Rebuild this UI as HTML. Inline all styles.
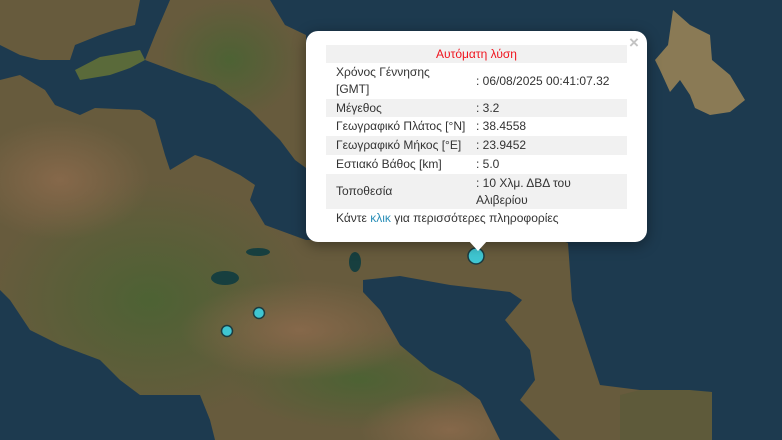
<!DOCTYPE html>
<html><head><meta charset="utf-8"><style>
html,body{margin:0;padding:0;width:782px;height:440px;overflow:hidden;font-family:"Liberation Sans",sans-serif;position:relative}
#map{position:absolute;left:0;top:0;display:block}
.pop{position:absolute;left:306px;top:31px;width:341px;height:211px;background:#fff;border-radius:12px;box-shadow:0 3px 14px rgba(0,0,0,.4)}
.tip{position:absolute;left:468px;top:240px;width:0;height:0;border-left:10px solid transparent;border-right:10px solid transparent;border-top:11px solid #fff}
.x{position:absolute;left:629px;top:33px;color:#c3c3c3;font:bold 17px "Liberation Sans",sans-serif;line-height:20px}
table{position:absolute;left:326px;top:45px;width:301px;border-collapse:collapse;font-size:12px;color:#333}
td{padding:0 0 0 10px;line-height:17px;vertical-align:middle}
td.v{padding-left:0}
tr.g{background:#f1f1f1}
.more{position:absolute;left:336px;top:211px;font-size:12px;color:#333;line-height:14px}
.more span{color:#2a8fb8}
</style></head><body>
<svg id="map" width="782" height="440" viewBox="0 0 782 440">
<defs>
<radialGradient id="r1" cx="0.5" cy="0.5" r="0.5"><stop offset="0" stop-color="#4d6234"/><stop offset="1" stop-color="#4d6234" stop-opacity="0"/></radialGradient>
<radialGradient id="r2" cx="0.5" cy="0.5" r="0.5"><stop offset="0" stop-color="#86684a"/><stop offset="1" stop-color="#86684a" stop-opacity="0"/></radialGradient>
</defs>
<rect width="782" height="440" fill="#675b3d"/>
<ellipse cx="150" cy="300" rx="160" ry="120" fill="url(#r1)"/>
<ellipse cx="360" cy="380" rx="130" ry="50" fill="url(#r1)"/>
<ellipse cx="300" cy="330" rx="120" ry="50" fill="url(#r2)"/>
<ellipse cx="60" cy="180" rx="90" ry="60" fill="url(#r2)"/>
<ellipse cx="450" cy="430" rx="90" ry="40" fill="url(#r2)"/>
<ellipse cx="230" cy="60" rx="70" ry="60" fill="url(#r1)"/>
<g fill="#1d3a4f">
<polygon points="140,0 170,0 155,35 145,60 185,75 215,85 250,110 280,140 295,160 306,168 306,240 265,225 250,200 255,185 240,175 210,160 195,155 170,170 165,155 155,120 140,110 95,108 80,115 55,105 45,90 20,75 0,80 0,45 20,55 40,60 70,60 75,45 100,35 115,30 135,25"/>
<polygon points="270,0 782,0 782,440 712,440 712,392 640,390 600,385 585,340 572,300 568,243 560,240 306,240 306,35 285,25"/>
<polygon points="363,280 400,276 450,285 510,292 522,300 505,320 530,350 535,380 520,400 540,420 560,440 500,440 480,400 460,385 430,370 400,345 380,310 363,292"/>
<polygon points="0,290 10,300 30,330 60,345 100,360 120,380 140,395 200,395 210,420 215,440 0,440"/>
</g>
<polygon points="75,70 100,57 140,50 145,60 130,68 110,75 80,80" fill="#5a6a3a"/>
<polygon points="673,10 690,25 710,35 712,60 730,75 745,100 730,112 710,115 695,108 690,95 680,80 670,92 660,70 655,60 668,45" fill="#8a7a55"/>
<polygon points="620,395 640,390 690,390 712,392 712,440 620,440" fill="#5e5a3a"/>
<g fill="#173f3f"><ellipse cx="225" cy="278" rx="14" ry="7"/><ellipse cx="258" cy="252" rx="12" ry="4"/><ellipse cx="355" cy="262" rx="6" ry="10"/></g>
<g stroke="#1b3b40" stroke-width="1.5" fill="#3fc6d2">
<circle cx="476" cy="256" r="8"/><circle cx="259" cy="313" r="5.5"/><circle cx="227" cy="331" r="5.5"/>
</g>
</svg>
<div class="pop"></div><div class="tip"></div>
<div class="x">×</div>
<table>
<tr class="g"><td colspan="2" style="text-align:center;color:#f0141e;padding:0;height:18px">Αυτόματη λύση</td></tr>
<tr style="height:36px"><td>Χρόνος Γέννησης<br>[GMT]</td><td class="v">: 06/08/2025 00:41:07.32</td></tr>
<tr class="g" style="height:18px"><td>Μέγεθος</td><td class="v">: 3.2</td></tr>
<tr style="height:19px"><td>Γεωγραφικό Πλάτος [°N]</td><td class="v">: 38.4558</td></tr>
<tr class="g" style="height:19px"><td>Γεωγραφικό Μήκος [°E]</td><td class="v">: 23.9452</td></tr>
<tr style="height:19px"><td>Εστιακό Βάθος [km]</td><td class="v">: 5.0</td></tr>
<tr class="g" style="height:35px"><td style="width:140px">Τοποθεσία</td><td class="v">: 10 Χλμ. ΔΒΔ του<br>Αλιβερίου</td></tr>
</table>
<div class="more">Κάντε <span>κλικ</span> για περισσότερες πληροφορίες</div>
</body></html>
